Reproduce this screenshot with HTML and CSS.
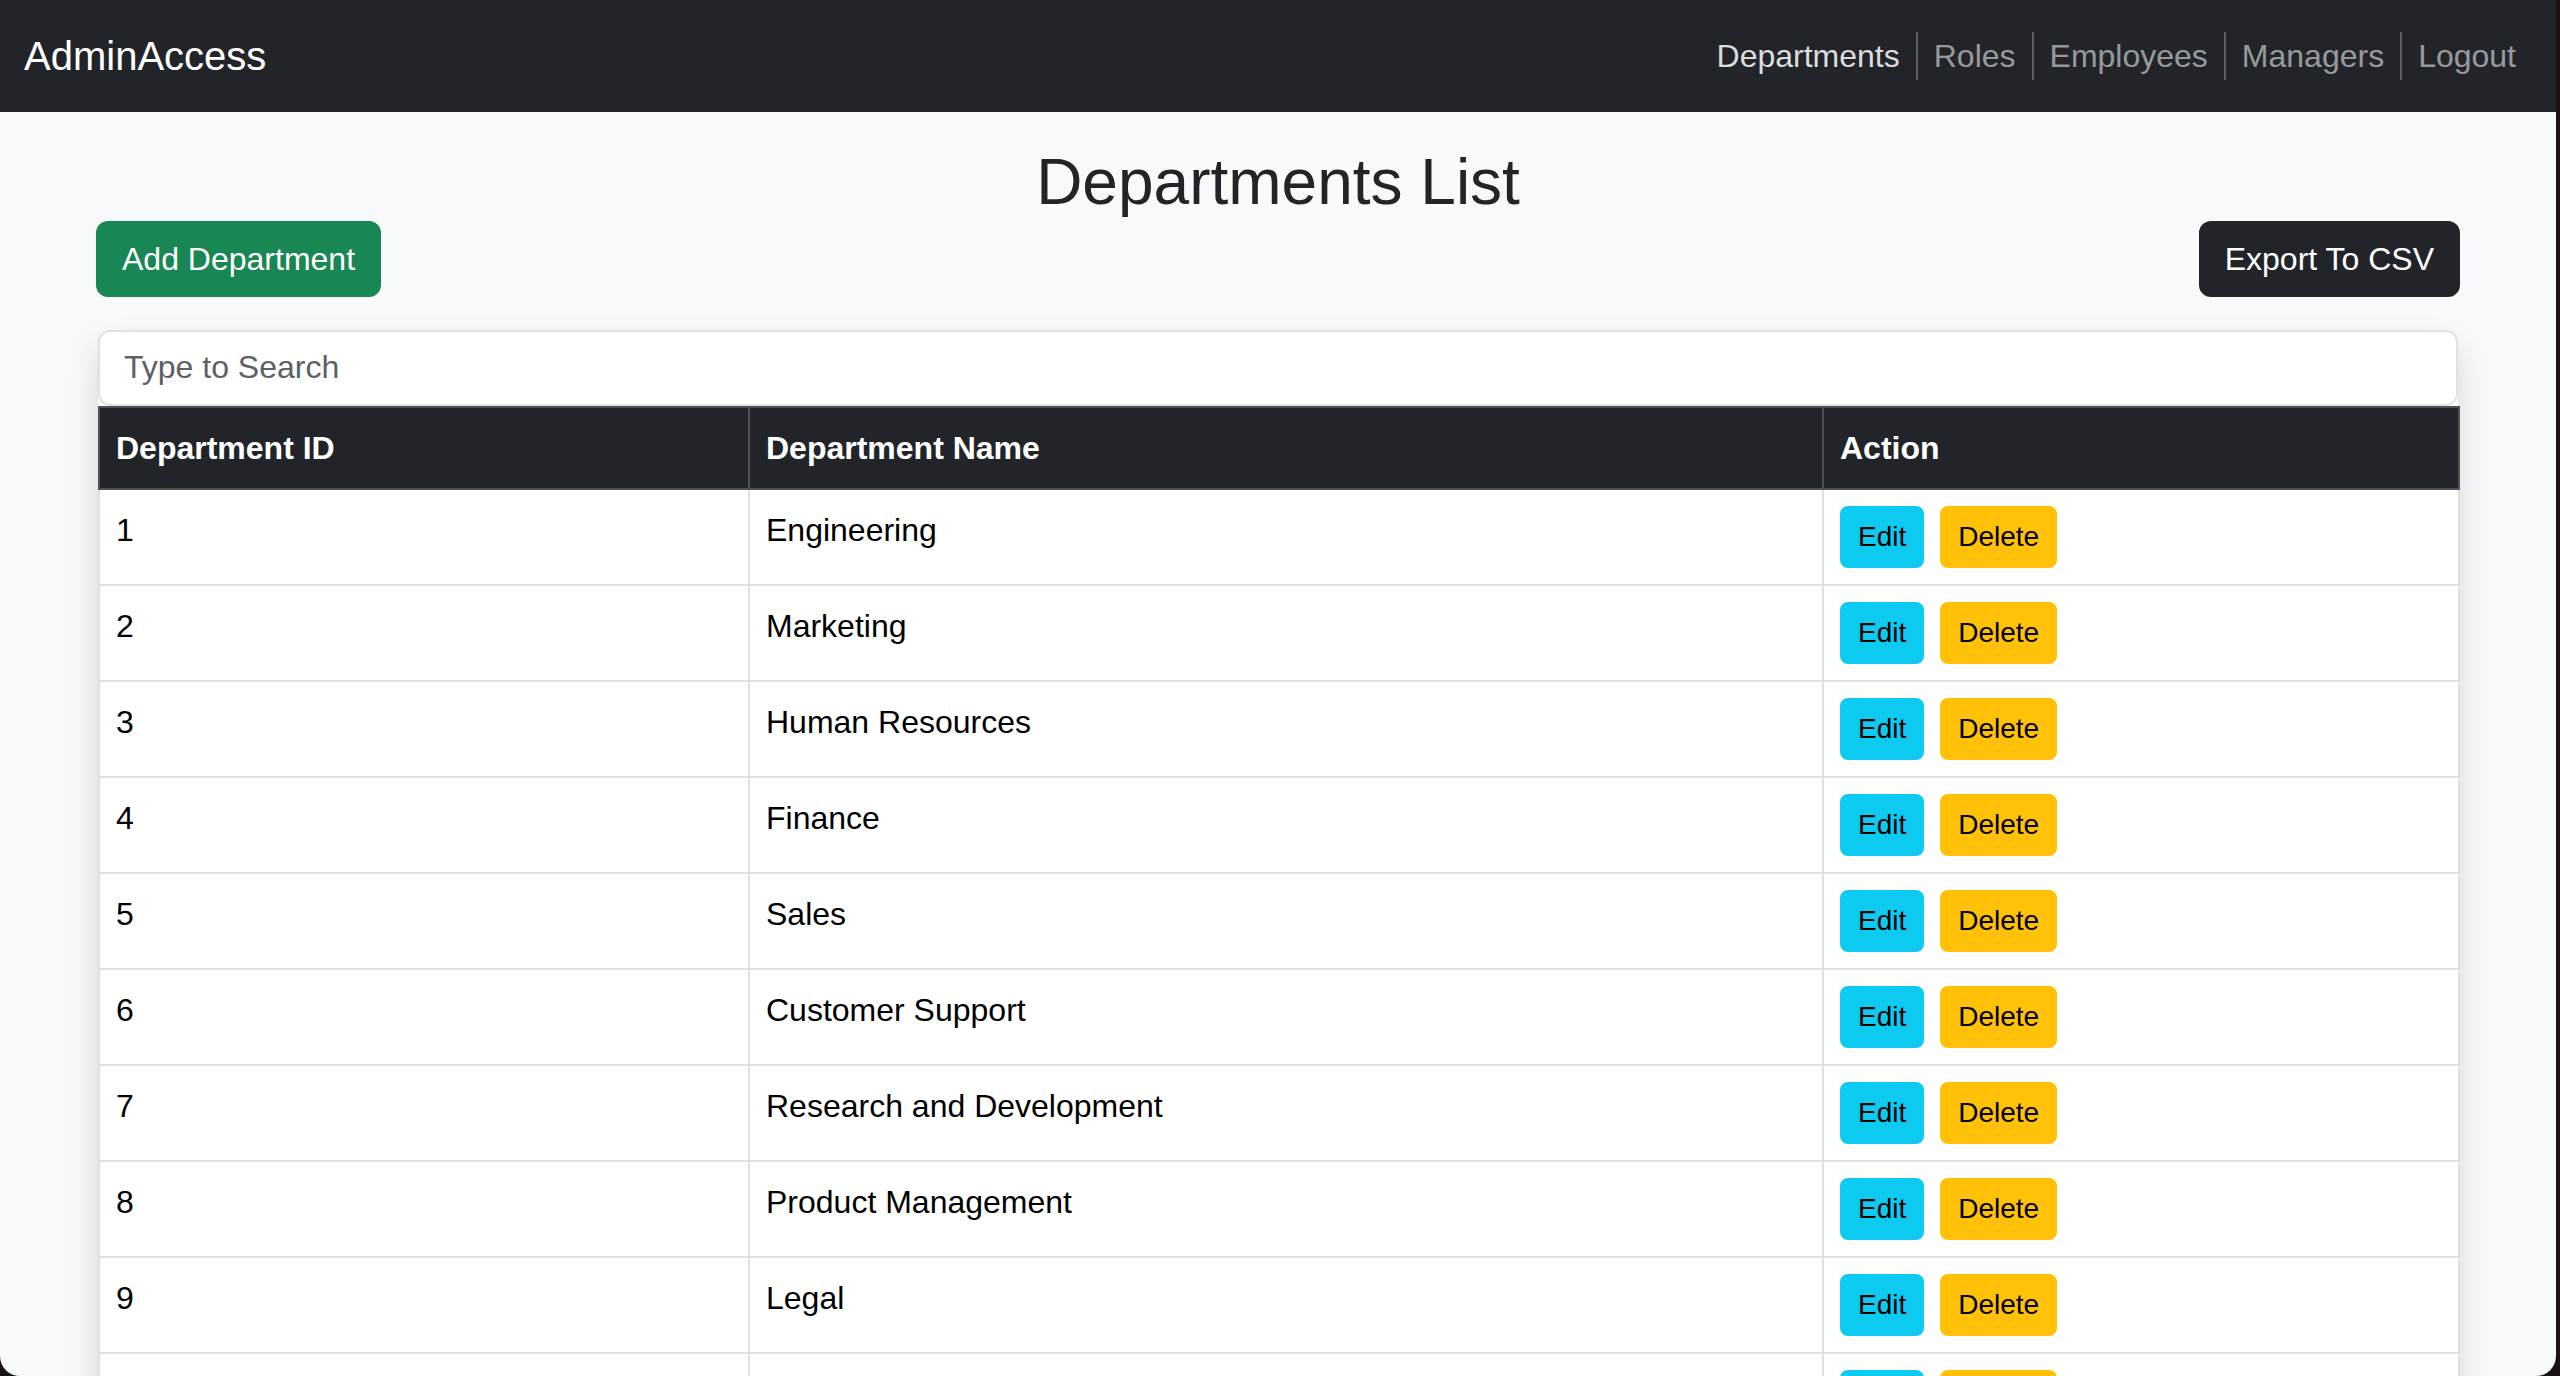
FILE: index.html
```html
<!DOCTYPE html>
<html lang="en">
<head>
<meta charset="utf-8">
<title>Departments List</title>
<link rel="stylesheet" href="styles.css">
</head>
<body>
<div class="window">
  <nav class="navbar">
    <a class="brand" href="#">AdminAccess</a>
    <ul class="nav">
      <li class="nav-item"><a class="nav-link active" href="#">Departments</a></li>
      <li class="nav-item"><a class="nav-link" href="#">Roles</a></li>
      <li class="nav-item"><a class="nav-link" href="#">Employees</a></li>
      <li class="nav-item"><a class="nav-link" href="#">Managers</a></li>
      <li class="nav-item"><a class="nav-link" href="#">Logout</a></li>
    </ul>
  </nav>
  <main class="main">
    <h2 class="title">Departments List</h2>
    <div class="toolbar">
      <button class="btn btn-success">Add Department</button>
      <button class="btn btn-dark">Export To CSV</button>
    </div>
    <div class="card">
      <input class="search" type="text" placeholder="Type to Search">
      <table class="table">
        <colgroup>
          <col class="c-id">
          <col class="c-name">
          <col class="c-action">
        </colgroup>
        <thead>
          <tr><th>Department ID</th><th>Department Name</th><th>Action</th></tr>
        </thead>
        <tbody>
          <tr><td>1</td><td>Engineering</td><td><div class="actions"><button class="btn btn-sm btn-info">Edit</button><button class="btn btn-sm btn-warning">Delete</button></div></td></tr>
          <tr><td>2</td><td>Marketing</td><td><div class="actions"><button class="btn btn-sm btn-info">Edit</button><button class="btn btn-sm btn-warning">Delete</button></div></td></tr>
          <tr><td>3</td><td>Human Resources</td><td><div class="actions"><button class="btn btn-sm btn-info">Edit</button><button class="btn btn-sm btn-warning">Delete</button></div></td></tr>
          <tr><td>4</td><td>Finance</td><td><div class="actions"><button class="btn btn-sm btn-info">Edit</button><button class="btn btn-sm btn-warning">Delete</button></div></td></tr>
          <tr><td>5</td><td>Sales</td><td><div class="actions"><button class="btn btn-sm btn-info">Edit</button><button class="btn btn-sm btn-warning">Delete</button></div></td></tr>
          <tr><td>6</td><td>Customer Support</td><td><div class="actions"><button class="btn btn-sm btn-info">Edit</button><button class="btn btn-sm btn-warning">Delete</button></div></td></tr>
          <tr><td>7</td><td>Research and Development</td><td><div class="actions"><button class="btn btn-sm btn-info">Edit</button><button class="btn btn-sm btn-warning">Delete</button></div></td></tr>
          <tr><td>8</td><td>Product Management</td><td><div class="actions"><button class="btn btn-sm btn-info">Edit</button><button class="btn btn-sm btn-warning">Delete</button></div></td></tr>
          <tr><td>9</td><td>Legal</td><td><div class="actions"><button class="btn btn-sm btn-info">Edit</button><button class="btn btn-sm btn-warning">Delete</button></div></td></tr>
          <tr><td>10</td><td>Operations</td><td><div class="actions"><button class="btn btn-sm btn-info">Edit</button><button class="btn btn-sm btn-warning">Delete</button></div></td></tr>
        </tbody>
      </table>
    </div>
  </main>
</div>
</body>
</html>
```
FILE: styles.css
```css
html, body {
  margin: 0;
  padding: 0;
  background: #1a1214;
}

body {
  font-family: "Liberation Sans", Arial, sans-serif;
}

.window {
  width: 2556px;
  height: 1376px;
  overflow: hidden;
  background: #f8f9fa;
  border-radius: 0 0 20px 20px;
}

.navbar {
  height: 112px;
  box-sizing: border-box;
  background: #212529;
  display: flex;
  align-items: center;
  justify-content: space-between;
  padding: 0 24px;
}

.brand {
  color: #fff;
  font-size: 40px;
  line-height: 60px;
  text-decoration: none;
}

.nav {
  list-style: none;
  margin: 0;
  padding: 0;
  display: flex;
  align-items: center;
}

.nav-item + .nav-item {
  border-left: 2px solid rgba(255, 255, 255, 0.28);
}

.nav-link {
  display: block;
  padding: 0 16px;
  font-size: 32px;
  line-height: 48px;
  color: rgba(255, 255, 255, 0.55);
  text-decoration: none;
}

.nav-link.active {
  color: rgba(255, 255, 255, 0.85);
}

.main {
  padding: 0 96px;
}

.title {
  margin: 32px 0 0;
  font-size: 64px;
  font-weight: 500;
  line-height: 1.2;
  text-align: center;
  color: #212529;
}

.toolbar {
  display: flex;
  justify-content: space-between;
}

.btn {
  font-family: inherit;
  font-size: 32px;
  line-height: 48px;
  padding: 12px 24px;
  border: 2px solid transparent;
  border-radius: 12px;
  color: #fff;
  cursor: pointer;
}

.btn-success {
  background: #198754;
  border-color: #198754;
}

.btn-dark {
  background: #212529;
  border-color: #212529;
}

.card {
  margin: 33px 2px 0;
  background: #fff;
  border-radius: 12px 12px 0 0;
  box-shadow: 0 16px 32px rgba(0, 0, 0, 0.15);
}

.search {
  display: block;
  width: 100%;
  box-sizing: border-box;
  font-family: inherit;
  font-size: 32px;
  line-height: 48px;
  height: 76px;
  padding: 12px 24px;
  border: 2px solid #dee2e6;
  border-radius: 12px;
  background: #fff;
  color: #212529;
  outline: none;
}

.search::placeholder {
  color: #5c6166;
}

.table {
  width: 100%;
  border-collapse: collapse;
  table-layout: fixed;
  font-size: 32px;
  line-height: 48px;
  color: #000;
}

.c-id { width: 650px; }
.c-name { width: 1074px; }
.c-action { width: 636px; }

.table th,
.table td {
  padding: 16px;
  text-align: left;
  vertical-align: top;
  border: 2px solid #dee2e6;
}

.table thead th {
  background: #212529;
  color: #fff;
  font-weight: 700;
  border-color: #4d5154;
}

.actions {
  display: flex;
  gap: 16px;
}

.btn-sm {
  font-size: 28px;
  line-height: 42px;
  padding: 8px 16px;
  border-radius: 8px;
  color: #000;
}

.btn-info {
  background: #0dcaf0;
  border-color: #0dcaf0;
}

.btn-warning {
  background: #ffc107;
  border-color: #ffc107;
}
```
